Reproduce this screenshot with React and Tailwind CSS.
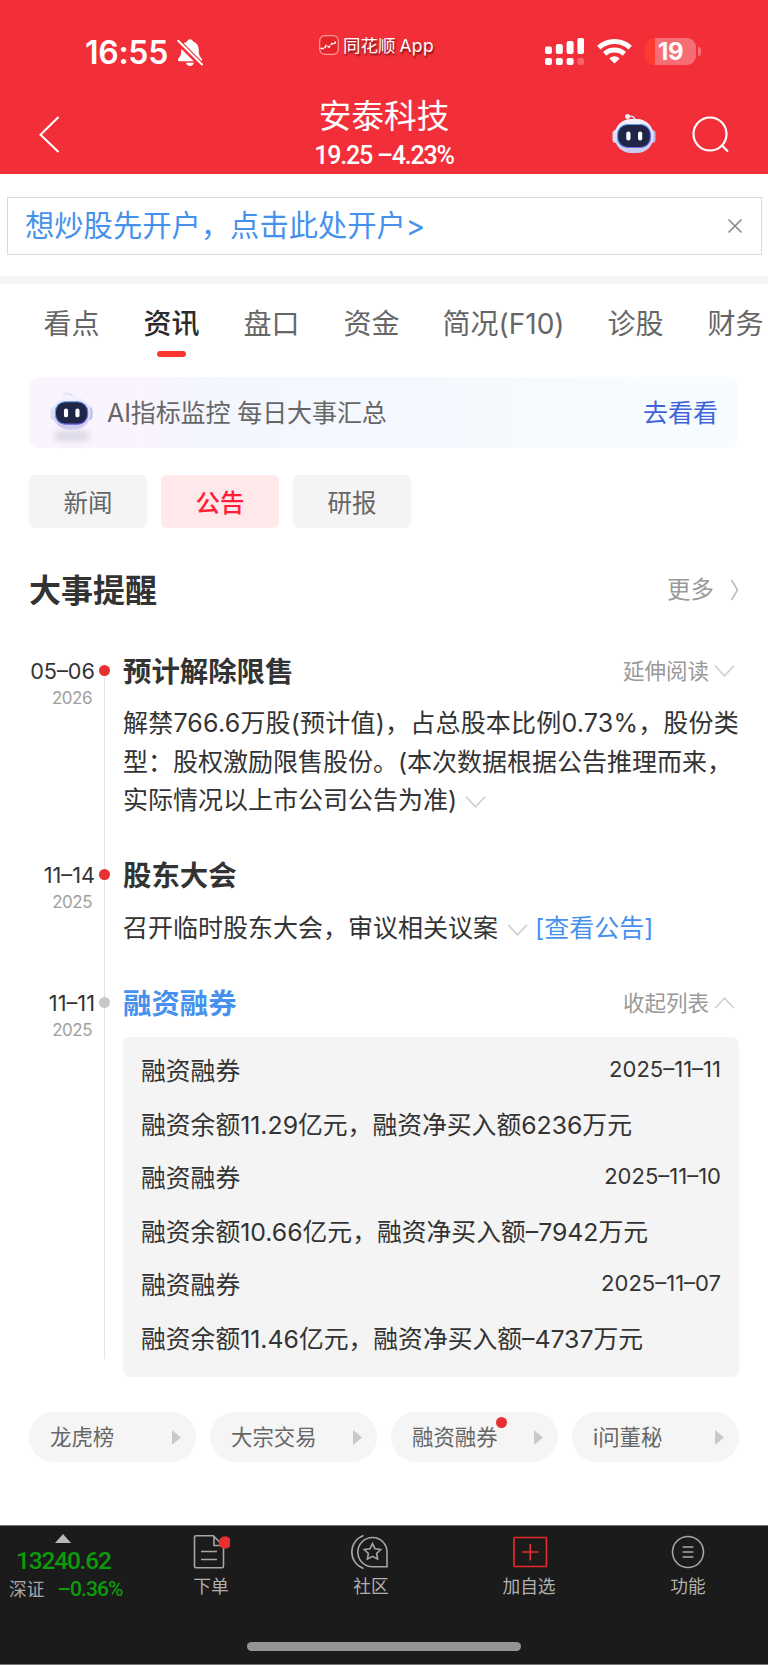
import clsx from 'clsx';

const tabs = ['看点', '资讯', '盘口', '资金', '简况(F10)', '诊股', '财务'];
const filters = ['新闻', '公告', '研报'];

const margins = [
  { date: '2025–11–11', text: '融资余额11.29亿元，融资净买入额6236万元' },
  { date: '2025–11–10', text: '融资余额10.66亿元，融资净买入额–7942万元' },
  { date: '2025–11–07', text: '融资余额11.46亿元，融资净买入额–4737万元' },
];

const shortcuts = [
  { label: '龙虎榜' },
  { label: '大宗交易' },
  { label: '融资融券', dot: true },
  { label: 'i问董秘' },
];

const Robot = ({ className }) => (
  <svg viewBox="0 0 44 42" className={className} fill="none">
    <defs>
      <linearGradient id="shell" x1="0" y1="0" x2="0" y2="1">
        <stop offset="0" stopColor="#f4f4fd" />
        <stop offset="1" stopColor="#c9cbef" />
      </linearGradient>
      <linearGradient id="rim" x1="0" y1="0" x2="1" y2="1">
        <stop offset="0" stopColor="#58b9e8" />
        <stop offset="1" stopColor="#7a4df0" />
      </linearGradient>
    </defs>
    <path d="M16 3.5c4-1 7 .5 7 4" stroke="#d9daf3" strokeWidth="1.6" />
    <circle cx="15.5" cy="3.5" r="2.5" fill="#ececf9" />
    <rect x="0.5" y="17" width="7" height="13" rx="3.5" fill="#dcdcf5" />
    <rect x="36.5" y="17" width="7" height="13" rx="3.5" fill="#b9bbea" />
    <rect x="2.5" y="6" width="39" height="34" rx="16.5" fill="url(#shell)" />
    <rect x="5.5" y="11.5" width="33" height="23" rx="10" fill="#1e2547" stroke="url(#rim)" strokeWidth="1.2" />
    <rect x="14.3" y="18.5" width="4.2" height="9" rx="2" fill="#fff" />
    <rect x="26" y="18.5" width="4.2" height="9" rx="2" fill="#fff" />
  </svg>
);

const Chevron = ({ up, className }) => (
  <svg viewBox="0 0 21 12" className={clsx('h-3 w-[21px] shrink-0', className)} fill="none" stroke="#cfcfcf" strokeWidth="1.6">
    <path d={up ? 'M1 11.2 10.5 1.2 20 11.2' : 'M1 .8 10.5 10.8 20 .8'} />
  </svg>
);

const StatusBar = () => (
  <div className="flex h-[90px] items-start pl-[85px]">
    <span className="mt-[36px] w-[90px] text-[32px] leading-[34px] font-semibold tracking-[-0.3px]">16:55</span>
    <svg viewBox="0 0 26 28" className="mt-[39px] ml-[2px] h-7 w-[26px]" fill="#fff">
      <path d="M10 2.6C10.6 1 11.8.3 13 .3s2.5.7 3.1 2.3c3.7 1.2 5.6 4.3 5.6 8.2 0 5 .9 6.3 2.9 8.6.9 1.1.5 2.8-1.2 2.8H2.6c-1.7 0-2.1-1.7-1.2-2.8 2-2.3 2.9-3.6 2.9-8.6 0-3.9 1.900-7 5.700-8.200z" />
      <path d="M9 23.800h8c-.5 1.900-2 3.200-4 3.200s-3.500-1.300-4-3.200z" />
      <path d="M0 1.500 24.500 26" stroke="#f22f38" strokeWidth="5.500" />
      <path d="M1.200 1.800 25 25.500" stroke="#fff" strokeWidth="2" strokeLinecap="round" />
    </svg>
    <div className="mt-[33px] ml-[116px] flex h-[24px] w-[226px] items-center">
      <svg viewBox="0 0 20 20" className="mr-1 h-5 w-5" fill="none">
        <rect x="0.700" y="0.700" width="18.600" height="18.600" rx="5" fill="#e5252b" stroke="#f99" strokeWidth="1.200" />
        <path d="M1.500 13.500h4l1.500-3L10 12l3-3.500 2.500.5 1-2.500" stroke="#fff" strokeWidth="1.500" strokeDasharray="3.500 1" />
      </svg>
      <span className="mt-[2px] text-[17.500px] leading-6 whitespace-nowrap [text-shadow:1px_2px_2px_rgba(70,0,0,0.7)]">
        同花顺<span className="ml-1 tracking-[0.300px]">App</span>
      </span>
    </div>
    <svg viewBox="0 0 40 28" className="mt-[38px] h-7 w-10" fill="#fff">
      <rect x="0" y="8.500" width="7" height="7.500" rx="2" />
      <rect x="10.800" y="6" width="7" height="10" rx="2" />
      <rect x="21.600" y="3" width="7" height="13" rx="2" />
      <rect x="32.400" y="0" width="6.600" height="16" rx="2" />
      <rect x="0" y="20" width="7" height="7" rx="2" />
      <rect x="10.800" y="20" width="7" height="7" rx="2" />
      <rect x="21.600" y="20" width="7" height="7" rx="2" />
      <rect x="32.400" y="20" width="6.600" height="7" rx="2" opacity="0.250" />
    </svg>
    <svg viewBox="0 0 36 26" className="mt-[38px] ml-[12px] h-[26px] w-9" fill="none" stroke="#fff" strokeWidth="5">
      <path d="M1.800 9.600a23 23 0 0 1 31.400 0" />
      <path d="M7.700 15.800a14.500 14.500 0 0 1 19.600 0" />
      <path d="M17.500 25.500 12.300 20.400a7.600 7.600 0 0 1 10.400 0z" fill="#fff" stroke="none" />
    </svg>
    <div className="mt-[38px] ml-[12px] flex items-center">
      <div className="flex h-[27px] w-[51px] items-center justify-center rounded-[9px] bg-linear-to-r from-[#ff3b30] from-20% to-[#f66d73] to-20% text-[24px] font-bold tracking-[-0.500px]">19</div>
      <div className="ml-[2px] h-[9px] w-[3px] rounded-r-full bg-[#f66d73]" />
    </div>
  </div>
);

const Header = () => (
  <header className="h-[174px] shrink-0 bg-[#f22f38] text-white">
    <StatusBar />
    <div className="flex h-[84px] pl-[39px]">
      <svg viewBox="0 0 20 37" className="mt-[26px] h-[37px] w-5" fill="none" stroke="#fff" strokeWidth="2">
        <path d="M19.500 1 1.500 18.700 19.500 36" />
      </svg>
      <div className="ml-[224px] w-[202px] text-center whitespace-nowrap">
        <h1 className="mt-[5px] text-[32.700px] leading-[42px] font-normal">安泰科技</h1>
        <p className="mt-[5px] font-[Roboto] text-[25px] leading-[28px] font-medium tracking-[-1.200px]">19.25 –4.23%</p>
      </div>
      <Robot className="mt-[23px] ml-[127px] h-[42px] w-11" />
      <svg viewBox="0 0 38 38" className="mt-[26px] ml-[36px] h-[38px] w-[38px]" fill="none" stroke="#fff" strokeWidth="2.200">
        <circle cx="18" cy="18" r="16.500" />
        <path d="m29.500 29 6.500 6.500" />
      </svg>
    </div>
  </header>
);

const EventRow = ({ date, year, title, muted, link, action, up, className, children }) => (
  <div className={clsx('flex', className)}>
    <div className="w-[66px] shrink-0 text-right">
      <p className="text-[21.700px] leading-7 whitespace-nowrap">{date}</p>
      <p className="mt-[1px] pr-[3px] text-[17px] leading-6 tracking-[-0.500px] text-[#a0a0a0]">{year}</p>
    </div>
    <div className={clsx('relative z-10 mt-[8px] ml-[4px] size-[11px] shrink-0 rounded-full', muted ? 'bg-[#c8c8c8]' : 'bg-[#e93030]')} />
    <div className="ml-[13px] w-[616px]">
      <div className="flex h-7 items-center">
        <h3 className={clsx('mt-[2px] text-[28.400px] leading-7 font-bold', link && 'text-[#4691ee]')}>{title}</h3>
        {action && (
          <span className="mr-[4px] ml-auto flex items-center text-[21.500px] leading-7 text-[#999]">
            {action}
            <Chevron up={up} className="ml-[5px]" />
          </span>
        )}
      </div>
      {children}
    </div>
  </div>
);

const NavItem = ({ label, className, children }) => (
  <div className={clsx('flex flex-col items-center', className)}>
    {children}
    <span className="mt-[5px] text-[17.700px] leading-6 text-[#b0b0b0]">{label}</span>
  </div>
);

const BottomNav = () => (
  <nav className="relative h-[140px] shrink-0 border-y border-[#777] bg-[#1b1b1b]">
    <div className="flex pt-[8px]">
      <div className="w-[150px] font-[Roboto,'Noto_Sans_CJK_SC',sans-serif]">
        <svg viewBox="0 0 16 9" className="ml-[55px] h-[9px] w-4" fill="#b8b8b8">
          <path d="M8 0 16 9H0z" />
        </svg>
        <p className="mt-[4px] ml-[16px] text-[24.500px] leading-7 font-medium tracking-[-1.200px] text-[#0a9c0a]">13240.62</p>
        <p className="mt-[1px] ml-[9px] flex text-[17.700px] leading-6 whitespace-nowrap text-[#a8a8a8]">
          <span className="mt-[2px]">深证</span>
          <span className="mt-[1px] ml-[13px] text-[21px] font-medium tracking-[-0.900px] text-[#0a9c0a]">–0.36%</span>
        </p>
      </div>
      <NavItem label="下单" className="ml-[21px] w-[80px]">
        <svg viewBox="0 0 38 36" className="h-9 w-[38px]" fill="none" stroke="#a6a6a6" strokeWidth="1.600">
          <path d="M21.500 1.800H4a1.500 1.500 0 0 0-1.500 1.500v29A1.500 1.500 0 0 0 4 33.800h26a1.500 1.500 0 0 0 1.500-1.500V11.500H22V2.500l9 9M9 17.500h16M9 25.500h16" />
          <circle cx="33" cy="8.500" r="6.200" fill="#e93030" stroke="none" />
        </svg>
      </NavItem>
      <NavItem label="社区" className="ml-[80px] w-[80px]">
        <svg viewBox="0 0 38 36" className="h-9 w-[38px] -translate-x-[1px]" fill="none" stroke="#a6a6a6" strokeWidth="1.600">
          <path d="M21.500 3.500A14.500 14.500 0 0 0 21.500 32.800H36V18A14.500 14.500 0 0 0 21.500 3.500z" />
          <path d="M12.500 1.500A17.500 17.500 0 0 0 12.500 34.500" />
          <path d="m21.500 9.500 2.500 5.200 5.700.8-4.100 4 1 5.600-5.100-2.700-5.100 2.700 1-5.600-4.100-4 5.700-.8z" />
        </svg>
      </NavItem>
      <NavItem label="加自选" className="ml-[78px] w-[80px]">
        <svg viewBox="0 0 36 36" className="size-9 translate-x-[1px]" fill="none" stroke="#e52b2b" strokeWidth="1.700">
          <rect x="2" y="3.500" width="32.500" height="29" rx="1" />
          <path d="M10 18h16.500M18.250 10v16.500" />
        </svg>
      </NavItem>
      <NavItem label="功能" className="ml-[79px] w-[80px]">
        <svg viewBox="0 0 36 36" className="size-9" fill="none" stroke="#a6a6a6" strokeWidth="1.600">
          <circle cx="18" cy="18" r="15.500" />
          <path d="M12.500 13h11M12.500 18h11M12.500 23h11" />
        </svg>
      </NavItem>
    </div>
    <div className="absolute bottom-[13px] left-[247px] h-[9px] w-[274px] rounded-full bg-[#949494]" />
  </nav>
);

export default function App() {
  return (
    <div lang="zh-CN" className="flex h-[1665px] w-[768px] flex-col overflow-hidden bg-white font-[Inter,'Noto_Sans_CJK_SC',sans-serif] text-[#333]">
      <Header />

      <div className="mt-[23px] mr-[6px] ml-[7px] flex h-[58px] shrink-0 items-center border border-[#dadada] pr-[18px] pl-[17px]">
        <span className="text-[29.300px] leading-[40px] whitespace-nowrap text-[#4691ee]">想炒股先开户，点击此处开户&gt;</span>
        <svg viewBox="0 0 16 16" className="ml-auto size-4" stroke="#888" strokeWidth="1.600">
          <path d="m1.500 1.500 13 13M14.500 1.500l-13 13" />
        </svg>
      </div>
      <div className="mt-[21px] h-2 shrink-0 bg-[#f4f4f4]" />

      <div className="flex h-[93px] shrink-0 gap-[44px] overflow-hidden pt-[20px] pl-[43.500px] text-[28px] leading-[40px] whitespace-nowrap text-[#666]">
        {tabs.map((tab) => (
          <div key={tab} className={clsx('flex shrink-0 flex-col items-center', tab === '资讯' && 'font-medium text-[#2b2b2b]', tab === '简况(F10)' && 'w-[120px]')}>
            {tab}
            {tab === '资讯' && <span className="mt-[7px] h-[6px] w-[29px] rounded-full bg-[#fc372f]" />}
          </div>
        ))}
      </div>

      <div className="mx-[29px] flex h-[71px] shrink-0 items-center rounded-[11px] bg-linear-to-r from-[#faf4fe] from-15% via-[#f3f6fe] via-25% to-[#f7fdff] pr-[21px] pl-[21px] text-[25px]">
        <div className="flex flex-col items-center pt-[5px]">
          <Robot className="h-[42px] w-[43px]" />
          <span className="-mt-px h-[10px] w-[34px] rounded-full bg-[#d9d6e4] blur-[3px]" />
        </div>
        <span className="mt-[3px] ml-[14px] tracking-[-0.100px] whitespace-nowrap text-[#666]">AI指标监控 每日大事汇总</span>
        <span className="mt-[3px] ml-auto text-[#3f63dc]">去看看</span>
      </div>

      <div className="mt-[27px] ml-[29px] flex shrink-0 gap-[14px]">
        {filters.map((name) => (
          <span
            key={name}
            className={clsx(
              'flex h-[53px] w-[118px] items-center justify-center rounded-[6px] pt-[3px] text-[24.500px]',
              name === '公告' ? 'bg-[#ffe8ea] font-medium text-[#ff1e38]' : 'bg-[#f4f4f4] text-[#666]',
            )}
          >
            {name}
          </span>
        ))}
      </div>

      <div className="mt-[42px] flex h-[40px] shrink-0 items-center pr-[29px] pl-[29px]">
        <h2 className="mt-[2px] text-[32px] leading-[40px] font-bold">大事提醒</h2>
        <span className="ml-auto text-[23.500px] text-[#999]">更多</span>
        <svg viewBox="0 0 9 22" className="ml-[16px] h-[22px] w-[9px]" fill="none" stroke="#bbb" strokeWidth="1.600">
          <path d="M1.500 1 7.500 11 1.500 21" />
        </svg>
      </div>

      <div className="relative mt-[47px] shrink-0 pl-[29px]">
        <div className="absolute top-[14px] bottom-[18px] left-[104px] w-px bg-[#e4e4e4]" />
        <EventRow date="05–06" year="2026" title="预计解除限售" action="延伸阅读" className="h-[204px]">
          <p className="mt-[19px] text-[25px] leading-[38.500px] whitespace-nowrap">
            <span className="tracking-[0.200px]">解禁766.6万股(预计值)，占总股本比例0.73%，股份类</span>
            <br />
            型：股权激励限售股份。(本次数据根据公告推理而来，
            <br />
            实际情况以上市公司公告为准)
            <Chevron className="ml-[8px] inline-block" />
          </p>
        </EventRow>
        <EventRow date="11–14" year="2025" title="股东大会" className="h-[128px]">
          <p className="mt-[20px] text-[25px] leading-[38.500px] whitespace-nowrap">
            召开临时股东大会，审议相关议案
            <Chevron className="mr-[7px] ml-[9px] inline-block" />
            <span className="text-[#4691ee]">[查看公告]</span>
          </p>
        </EventRow>
        <EventRow date="11–11" year="2025" title="融资融券" muted link action="收起列表" up>
          <div className="mt-[20px] h-[340px] rounded-[7px] bg-[#f4f4f4] px-[18px] pt-[8px] text-[24.800px] leading-[53.600px] whitespace-nowrap">
            {margins.map((item) => (
              <div key={item.date}>
                <div className="flex justify-between">
                  <span>融资融券</span>
                  <span className="-mt-[2px] text-[22px]">{item.date}</span>
                </div>
                <p>{item.text}</p>
              </div>
            ))}
          </div>
        </EventRow>
      </div>

      <div className="mt-[35px] mb-[63px] flex shrink-0 gap-[14px] px-[29px]">
        {shortcuts.map(({ label, dot }) => (
          <div key={label} className="flex h-[50px] w-[167px] items-center justify-between rounded-full bg-[#f5f5f5] pr-[15px] pl-[21px] text-[21.400px] whitespace-nowrap text-[#666]">
            <span className="relative">
              {label}
              {dot && <i className="absolute -top-[4px] -right-[9px] size-[11px] rounded-full bg-[#e93030]" />}
            </span>
            <svg viewBox="0 0 9 15" className="h-[15px] w-[9px]" fill="#c9c9c9">
              <path d="M0 0 9 7.500 0 15z" />
            </svg>
          </div>
        ))}
      </div>

      <BottomNav />
    </div>
  );
}
